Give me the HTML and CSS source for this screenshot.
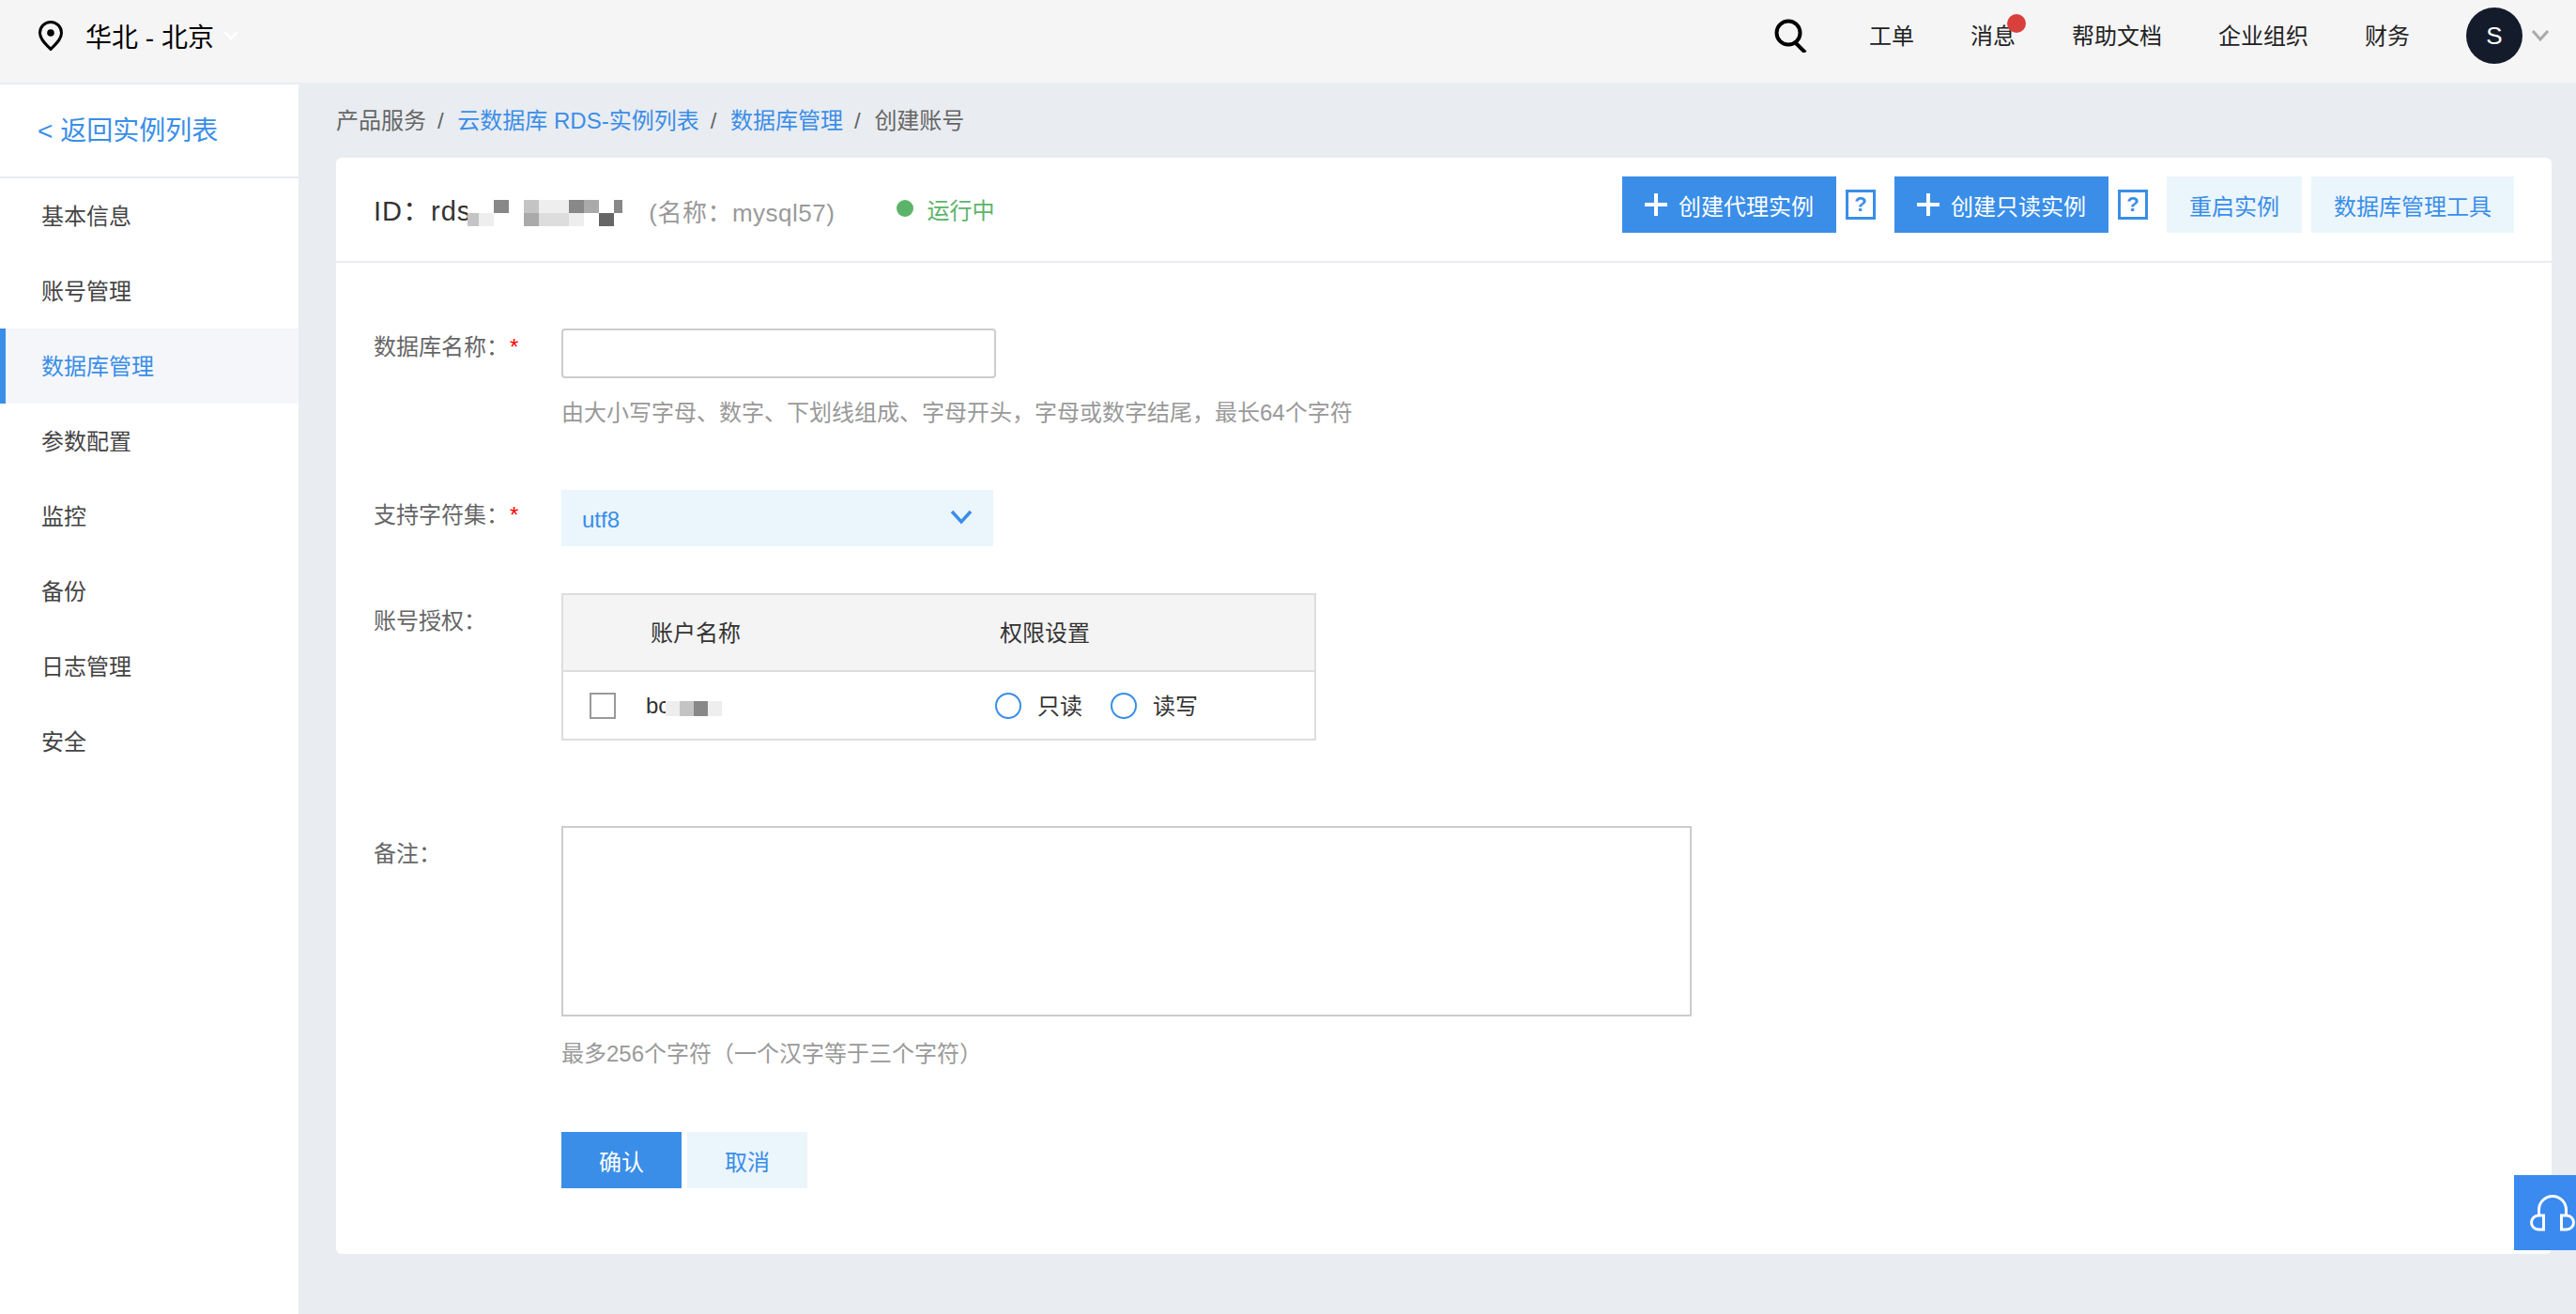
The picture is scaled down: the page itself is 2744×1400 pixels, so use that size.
FILE: index.html
```html
<!DOCTYPE html>
<html lang="zh-CN">
<head>
    <meta charset="UTF-8">
    <title>创建账号</title>
    <link rel="stylesheet" href="styles.css">
</head>
<body>

    <header class="topbar">
        <div class="region">
            <svg class="pin-icon" width="26" height="32" viewBox="0 0 26 32">
                <path d="M13 1.5C6.6 1.5 1.5 6.6 1.5 13c0 7.5 7 12.500 11.500 17.500C17.500 25.500 24.500 20.500 24.500 13 24.500 6.600 19.400 1.500 13 1.500Z" fill="none" stroke="#000" stroke-width="3"/>
                <circle cx="13" cy="13" r="3.800" fill="#000"/>
            </svg>
            <span>华北 - 北京</span>
            <svg class="region-arrow" width="16" height="10" viewBox="0 0 16 10">
                <path d="M1 1l7 7 7-7" fill="none" stroke="#fff" stroke-width="2.500"/>
            </svg>
        </div>
        <nav class="topnav">
            <svg class="search-icon" width="36" height="36" viewBox="0 0 36 36">
                <circle cx="15" cy="15" r="12.500" fill="none" stroke="#000" stroke-width="4"/>
                <path d="M23 26l10 10" stroke="#000" stroke-width="4"/>
            </svg>
            <a>工单</a>
            <a class="has-dot">消息<i class="red-dot"></i></a>
            <a>帮助文档</a>
            <a>企业组织</a>
            <a>财务</a>
            <div class="user">
                <span class="avatar">S</span>
                <svg width="20" height="14" viewBox="0 0 20 14">
                    <path d="M2 2l8 9 8-9" fill="none" stroke="#aaa" stroke-width="3"/>
                </svg>
            </div>
        </nav>
    </header>

    <div class="page">
        <aside class="sidebar">
            <a class="back-link">&lt; 返回实例列表</a>
            <ul class="side-menu">
                <li>基本信息</li>
                <li>账号管理</li>
                <li class="active">数据库管理</li>
                <li>参数配置</li>
                <li>监控</li>
                <li>备份</li>
                <li>日志管理</li>
                <li>安全</li>
            </ul>
        </aside>

        <main class="main">
            <div class="breadcrumb">
                <span>产品服务</span><em>/</em>
                <a>云数据库 RDS-实例列表</a><em>/</em>
                <a>数据库管理</a><em>/</em>
                <span>创建账号</span>
            </div>

            <section class="card">
                <div class="card-head">
                    <div class="instance-id">
                        <span>ID：rds</span>
                        <div class="mosaic id-mosaic">
                            <i class="m0"></i><i class="m0"></i><i class="m5"></i><i class="m0"></i><i class="m3"></i><i class="m1"></i><i class="m1"></i><i class="m5"></i><i class="m4"></i><i class="m0"></i><i class="m5"></i>
                            <i class="m3"></i><i class="m1"></i><i class="m0"></i><i class="m0"></i><i class="m4"></i><i class="m2"></i><i class="m2"></i><i class="m1"></i><i class="m0"></i><i class="m6"></i><i class="m0"></i>
                        </div>
                    </div>
                    <span class="instance-name">(名称：mysql57)</span>
                    <span class="status"><i class="status-dot"></i>运行中</span>

                    <div class="actions">
                        <button class="btn btn-primary btn-icon">
                            <svg width="24" height="24" viewBox="0 0 24 24"><path d="M12 0v24M0 12h24" stroke="#fff" stroke-width="4"/></svg>创建代理实例
                        </button>
                        <span class="help">?</span>
                        <button class="btn btn-primary btn-icon">
                            <svg width="24" height="24" viewBox="0 0 24 24"><path d="M12 0v24M0 12h24" stroke="#fff" stroke-width="4"/></svg>创建只读实例
                        </button>
                        <span class="help">?</span>
                        <button class="btn btn-light btn-head">重启实例</button>
                        <button class="btn btn-light btn-head">数据库管理工具</button>
                    </div>
                </div>

                <form class="form">
                    <div class="form-row">
                        <label class="form-label">数据库名称：<b>*</b></label>
                        <div>
                            <input class="text-input" type="text">
                            <p class="hint hint-name">由大小写字母、数字、下划线组成、字母开头，字母或数字结尾，最长64个字符</p>
                        </div>
                    </div>

                    <div class="form-row row-charset">
                        <label class="form-label">支持字符集：<b>*</b></label>
                        <div class="select">
                            <span>utf8</span>
                            <svg width="24" height="16" viewBox="0 0 24 16">
                                <path d="M2 2l10 11L22 2" fill="none" stroke="#3a8ee8" stroke-width="3.500"/>
                            </svg>
                        </div>
                    </div>

                    <div class="form-row row-account">
                        <label class="form-label">账号授权：</label>
                        <table class="account-table">
                            <tr>
                                <th class="col-check"></th>
                                <th class="col-name">账户名称</th>
                                <th>权限设置</th>
                            </tr>
                            <tr>
                                <td><span class="checkbox"></span></td>
                                <td>
                                    <div class="account-name">
                                        <span>bc</span>
                                        <div class="mosaic name-mosaic"><i class="m1"></i><i class="m3"></i><i class="m5"></i><i class="m1"></i></div>
                                    </div>
                                </td>
                                <td>
                                    <div class="radios">
                                        <span class="radio"></span><span class="radio-text">只读</span>
                                        <span class="radio"></span><span class="radio-text">读写</span>
                                    </div>
                                </td>
                            </tr>
                        </table>
                    </div>

                    <div class="form-row row-note">
                        <label class="form-label">备注：</label>
                        <div>
                            <textarea class="note"></textarea>
                            <p class="hint hint-note">最多256个字符（一个汉字等于三个字符）</p>
                        </div>
                    </div>

                    <div class="form-buttons">
                        <button class="btn btn-primary btn-form" type="button">确认</button>
                        <button class="btn btn-light btn-form" type="button">取消</button>
                    </div>
                </form>
            </section>
        </main>
    </div>

    <div class="float-help">
        <svg width="50" height="40" viewBox="95 72 50 40">
            <path d="M104.500 96V89a14.500 14.500 0 0 1 29 0v7" fill="none" stroke="#fff" stroke-width="3"/>
            <path d="M109.500 95H104a7.500 7.500 0 0 0 0 15h5.500Z" fill="none" stroke="#fff" stroke-width="3"/>
            <path d="M128.500 95H134a7.500 7.500 0 0 1 0 15h-5.500Z" fill="none" stroke="#fff" stroke-width="3"/>
        </svg>
    </div>

</body>
</html>
```

FILE: styles.css
```css
* {
    box-sizing: border-box;
}

body {
    margin: 0;
    width: 2744px;
    height: 1400px;
    overflow: hidden;
    font-family: "Liberation Sans", "Noto Sans CJK SC", sans-serif;
    font-size: 24px;
    color: #333;
    background-color: #e9ecf1;
}

/* top bar */
.topbar {
    display: flex;
    align-items: center;
    justify-content: space-between;
    height: 90px;
    padding: 0 28px 12px 41px;
    background-color: #f5f5f5;
    border-bottom: 2px solid #e9ecf1;
}

.region {
    display: flex;
    align-items: center;
    font-size: 28px;
    color: #000;
}

.pin-icon {
    margin-right: 24px;
}

.region-arrow {
    margin-left: 10px;
}

.topnav {
    display: flex;
    align-items: center;
    gap: 60px;
    color: #222;
}

.topnav a {
    padding-bottom: 4px;
}

.search-icon {
    margin-right: 5px;
}

.has-dot {
    position: relative;
}

.red-dot {
    position: absolute;
    top: -4px;
    right: -11px;
    width: 20px;
    height: 20px;
    border-radius: 50%;
    background-color: #d9403b;
}

.user {
    display: flex;
    align-items: center;
    gap: 9px;
}

.avatar {
    display: flex;
    align-items: center;
    justify-content: center;
    width: 60px;
    height: 60px;
    border-radius: 50%;
    font-size: 26px;
    color: #fff;
    background-color: #141c2c;
}

/* page layout */
.page {
    display: flex;
    height: 1310px;
}

.sidebar {
    flex: none;
    width: 318px;
    background-color: #fff;
}

.back-link {
    display: block;
    height: 100px;
    padding-left: 40px;
    line-height: 100px;
    font-size: 28px;
    color: #3a8ee8;
    border-bottom: 2px solid #e9ecf1;
}

.side-menu {
    margin: 0;
    padding: 0;
    list-style: none;
}

.side-menu li {
    height: 80px;
    padding: 2px 0 0 44px;
    line-height: 78px;
    color: #444;
}

.side-menu .active {
    padding-left: 38px;
    color: #3a8ee8;
    background-color: #f5f6fa;
    border-left: 6px solid #3a8ee8;
}

.main {
    flex: 1;
    padding: 0 26px 0 40px;
}

.breadcrumb {
    height: 78px;
    line-height: 78px;
    color: #666;
}

.breadcrumb a {
    color: #3a8ee8;
}

.breadcrumb em {
    margin: 0 8px 0 12px;
    font-style: normal;
}

/* card */
.card {
    height: 1168px;
    background-color: #fff;
    border-radius: 6px;
}

.card-head {
    display: flex;
    align-items: center;
    height: 112px;
    padding: 0 40px 2px 40px;
    border-bottom: 2px solid #e9ecf1;
}

.instance-id {
    display: flex;
    align-items: center;
    font-size: 29px;
    letter-spacing: 1px;
    color: #333;
}

.mosaic {
    display: grid;
    grid-auto-rows: 16px;
}

.mosaic i {
    display: block;
}

.id-mosaic {
    grid-template-columns: 12px repeat(9, 16px) 9px;
    grid-auto-rows: 14px;
    margin: 10px 0 0 -4px;
}

.name-mosaic {
    grid-template-columns: repeat(4, 15px);
    margin: 6px 0 0 -4px;
}

.m0 { background-color: #fff; }
.m1 { background-color: #eee; }
.m2 { background-color: #ddd; }
.m3 { background-color: #c4c4c4; }
.m4 { background-color: #aaa; }
.m5 { background-color: #888; }
.m6 { background-color: #666; }

.instance-name {
    margin: 4px 0 0 28px;
    font-size: 26px;
    letter-spacing: 0.5px;
    color: #999;
}

.status {
    display: flex;
    align-items: center;
    margin-left: 66px;
    color: #5cb46a;
}

.status-dot {
    width: 18px;
    height: 18px;
    margin-right: 14px;
    border-radius: 50%;
    background-color: #5cb46a;
}

.actions {
    display: flex;
    align-items: center;
    align-self: flex-start;
    margin: 20px 0 0 auto;
}

.btn {
    display: flex;
    align-items: center;
    justify-content: center;
    height: 60px;
    border: none;
    padding: 0;
    font-family: inherit;
    font-size: 24px;
}

.btn-primary {
    color: #fff;
    background-color: #3a8ee8;
}

.btn-light {
    color: #3a8ee8;
    background-color: #ebf5fc;
}

.btn-icon {
    width: 228px;
    gap: 12px;
    margin-left: 10px;
}

.btn-head {
    padding: 0 24px;
    margin-left: 10px;
}

.help {
    display: flex;
    align-items: center;
    justify-content: center;
    width: 32px;
    height: 32px;
    margin: 0 10px;
    font-size: 22px;
    font-weight: bold;
    color: #3a8ee8;
    border: 3px solid #3a8ee8;
}

/* form */
.form {
    padding: 70px 0 0 40px;
}

.form-row {
    display: flex;
}

.form-label {
    flex: none;
    width: 200px;
    padding-top: 3px;
    line-height: 34px;
    color: #666;
}

.form-label b {
    margin-left: 1px;
    font-weight: normal;
    color: #f00;
}

.text-input {
    display: block;
    width: 463px;
    height: 53px;
    border: 2px solid #ccc;
    border-radius: 4px;
}

.hint {
    margin: 0;
    line-height: 34px;
    color: #999;
}

.hint-name {
    margin-top: 20px;
}

.hint-note {
    margin-top: 23px;
}

.row-charset {
    margin-top: 65px;
}

.row-charset .form-label {
    padding-top: 10px;
}

.select {
    display: flex;
    align-items: center;
    justify-content: space-between;
    width: 460px;
    height: 60px;
    padding: 4px 22px 0;
    color: #3a8ee8;
    background-color: #ebf5fc;
}

.select svg {
    margin-top: -6px;
}

.row-account {
    margin-top: 50px;
}

.row-account .form-label {
    padding-top: 13px;
}

.account-table {
    width: 804px;
    height: 157px;
    border-collapse: separate;
    border-spacing: 0;
    border: 2px solid #ddd;
}

.account-table th {
    height: 82px;
    padding: 0 0 4px 5px;
    font-weight: normal;
    text-align: left;
    color: #333;
    background-color: #f4f4f4;
    border-bottom: 2px solid #ddd;
}

.account-table td {
    padding: 0;
}

.col-check {
    width: 88px;
}

.col-name {
    width: 372px;
}

.checkbox {
    display: block;
    width: 28px;
    height: 28px;
    margin-left: 28px;
    border: 2px solid #999;
}

.account-name {
    display: flex;
    align-items: center;
}

.radios {
    display: flex;
    align-items: center;
}

.radio {
    width: 28px;
    height: 28px;
    border-radius: 50%;
    border: 2px solid #3a8ee8;
}

.radio-text {
    margin: 0 30px 0 17px;
    padding-bottom: 2px;
}

.row-note {
    margin-top: 91px;
}

.row-note .form-label {
    padding-top: 13px;
}

.note {
    display: block;
    width: 1204px;
    height: 203px;
    border: 2px solid #ccc;
    resize: none;
}

.form-buttons {
    display: flex;
    gap: 6px;
    margin: 66px 0 0 200px;
}

.btn-form {
    width: 128px;
}

/* floating help button */
.float-help {
    position: fixed;
    top: 1252px;
    right: 0;
    width: 66px;
    height: 80px;
    padding: 20px 0 0 17px;
    overflow: hidden;
    background-color: #3a8af0;
}
```
